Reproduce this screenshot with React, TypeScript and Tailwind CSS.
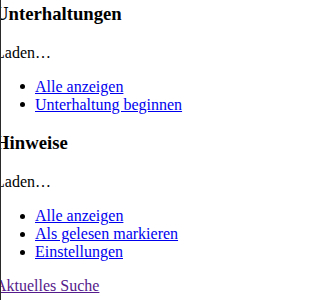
export default function App() {
  const sections = [
    { title: "Unterhaltungen", links: ["Alle anzeigen", "Unterhaltung beginnen"] },
    { title: "Hinweise", links: ["Alle anzeigen", "Als gelesen markieren", "Einstellungen"] },
  ]

  return (
    <div className="flex min-h-[300px] bg-white text-black font-['Liberation_Serif',serif] text-[16px] leading-[normal]">
      <div className="w-px shrink-0 bg-[#2a2a2a]" />
      <div className="flex-1 overflow-hidden">
        <div className="-ml-[6px] pt-[3px]">
          {sections.map((s, i) => (
            <section key={s.title}>
              <h3 className={`text-[18.72px] font-bold mb-[18.72px] ${i === 0 ? "mt-0" : "mt-[18.72px]"}`}>
                {s.title}
              </h3>
              <p className="my-4">Laden…</p>
              <ul className="pl-10 my-4">
                {s.links.map((l) => (
                  <li key={l} className="flex items-center -ml-4">
                    <span className="flex w-4 shrink-0 items-center pl-[1px]">
                      <span className="block size-[5px] rounded-full bg-black" />
                    </span>
                    <a href="#" className="text-[#0000ee] underline">
                      {l}
                    </a>
                  </li>
                ))}
              </ul>
            </section>
          ))}
          <p className="my-4">
            <a href="#" className="text-[#551a8b] underline">
              Aktuelles Suche
            </a>
          </p>
        </div>
      </div>
    </div>
  )
}
